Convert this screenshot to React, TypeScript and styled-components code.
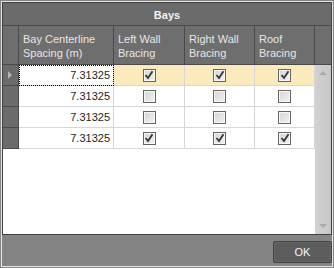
import React from "react";
import styled, { createGlobalStyle } from "styled-components";

const Global = createGlobalStyle`
  html, body { margin: 0; padding: 0; background: #858585; }
  * { box-sizing: border-box; }
`;

const Dialog = styled.div`
  width: 334px;
  height: 268px;
  padding: 1px;
  background: #858585;
  font-family: "Liberation Sans", Arial, sans-serif;
  font-size: 11px;
`;

const Frame = styled.div`
  width: 332px;
  height: 266px;
  border: 1px solid #e6e6e6;
  display: flex;
  flex-direction: column;
  background: #848484;
`;

const Grid = styled.div`
  height: 233px;
  border: 1px solid #404040;
  display: flex;
  flex-direction: column;
  background: #ffffff;
`;

const TitleBar = styled.div`
  height: 23px;
  flex: none;
  background: #6b6b6b;
  border-bottom: 1px solid #4a4a4a;
  color: #f2f2f2;
  font-weight: bold;
  display: flex;
  align-items: center;
  justify-content: center;
  padding-top: 1px;
`;

const COLS = "16px 95px 71px 70px 60px 16px";

const HeaderRow = styled.div`
  height: 39px;
  flex: none;
  display: grid;
  grid-template-columns: ${COLS};
  background: #6e6e6e;
  border-bottom: 1px solid #4a4a4a;
`;

const HeaderCell = styled.div`
  border-right: 1px solid #4a4a4a;
  color: #e6e6e6;
  line-height: 14px;
  padding: 6px 0 0 4px;
  &:last-child { border-right: none; }
`;

const Body = styled.div`
  flex: 1;
  display: flex;
`;

const Rows = styled.div`
  flex: 1;
  background: #ffffff;
`;

const Row = styled.div`
  height: 21px;
  display: grid;
  grid-template-columns: 16px 95px 71px 70px 60px;
`;

const RowHead = styled.div`
  background: #6b6b6b;
  border-right: 1px solid #4a4a4a;
  border-bottom: 1px solid #4a4a4a;
  display: flex;
  align-items: center;
  justify-content: center;
  padding-right: 1px;
`;

const Arrow = styled.div`
  width: 0;
  height: 0;
  border-top: 4px solid transparent;
  border-bottom: 4px solid transparent;
  border-left: 4px solid #b4b4b4;
`;

const Cell = styled.div<{ $sel?: boolean; $focus?: boolean }>`
  background: ${(p) => (p.$sel && !p.$focus ? "#fbeabb" : "#ffffff")};
  border-right: 1px solid #d6d6d6;
  border-bottom: 1px solid #d6d6d6;
  position: relative;
  display: flex;
  align-items: center;
  justify-content: center;
`;

const ValueCell = styled(Cell)`
  justify-content: flex-end;
  padding-right: 3px;
  color: #1e1e1e;
  ${(p) => (p.$focus ? "outline: 1px dotted #000; outline-offset: -1px;" : "")}
`;

const Box = styled.div`
  width: 13px;
  height: 13px;
  border: 1px solid #646464;
  background: linear-gradient(135deg, #d4d4d4 0%, #f2f2f2 100%);
  box-shadow: inset 0 0 0 1px #f8f8f8;
  display: flex;
  align-items: center;
  justify-content: center;
`;

const Scrollbar = styled.div`
  width: 16px;
  background: linear-gradient(90deg, #d2d2d2 0%, #c6c6c6 100%);
  display: flex;
  flex-direction: column;
  justify-content: space-between;
  align-items: center;
  padding: 6px 0 6px;
`;

const ScrollArrow = styled.div<{ $down?: boolean }>`
  width: 0;
  height: 0;
  border-left: 4px solid transparent;
  border-right: 4px solid transparent;
  ${(p) =>
    p.$down
      ? "border-top: 4px solid #a9a9a9;"
      : "border-bottom: 4px solid #a9a9a9;"}
`;

const Footer = styled.div`
  flex: 1;
  display: flex;
  justify-content: flex-end;
  align-items: flex-start;
  padding: 6px 0 0 0;
`;

const OkButton = styled.button`
  width: 59px;
  height: 22px;
  background: #5d5d5d;
  border: 1px solid #454545;
  border-radius: 2px;
  color: #f4f4f4;
  font-family: "Liberation Sans", Arial, sans-serif;
  font-size: 11px;
  padding: 0;
  box-shadow: inset 0 0 0 1px #666;
`;

const Check = ({ on }: { on: boolean }) => (
  <Box>
    {on && (
      <svg width="10" height="10" viewBox="0 0 10 10">
        <path d="M1.5 5 L4 8 L8.5 1.2" stroke="#353535" strokeWidth="1.8" fill="none" />
      </svg>
    )}
  </Box>
);

const data = [
  { v: "7.31325", l: true, r: true, f: true },
  { v: "7.31325", l: false, r: false, f: false },
  { v: "7.31325", l: false, r: false, f: false },
  { v: "7.31325", l: true, r: true, f: true },
];

export default function App() {
  return (
    <>
      <Global />
      <Dialog>
        <Frame>
          <Grid>
            <TitleBar>Bays</TitleBar>
            <HeaderRow>
              <HeaderCell />
              <HeaderCell>Bay Centerline<br />Spacing (m)</HeaderCell>
              <HeaderCell>Left Wall<br />Bracing</HeaderCell>
              <HeaderCell>Right Wall<br />Bracing</HeaderCell>
              <HeaderCell>Roof<br />Bracing</HeaderCell>
              <HeaderCell />
            </HeaderRow>
            <Body>
              <Rows>
                {data.map((d, i) => (
                  <Row key={i}>
                    <RowHead>{i === 0 && <Arrow />}</RowHead>
                    <ValueCell $sel={i === 0} $focus={i === 0}>{d.v}</ValueCell>
                    <Cell $sel={i === 0}><Check on={d.l} /></Cell>
                    <Cell $sel={i === 0}><Check on={d.r} /></Cell>
                    <Cell $sel={i === 0}><Check on={d.f} /></Cell>
                  </Row>
                ))}
              </Rows>
              <Scrollbar>
                <ScrollArrow />
                <ScrollArrow $down />
              </Scrollbar>
            </Body>
          </Grid>
          <Footer>
            <OkButton>OK</OkButton>
          </Footer>
        </Frame>
      </Dialog>
    </>
  );
}
